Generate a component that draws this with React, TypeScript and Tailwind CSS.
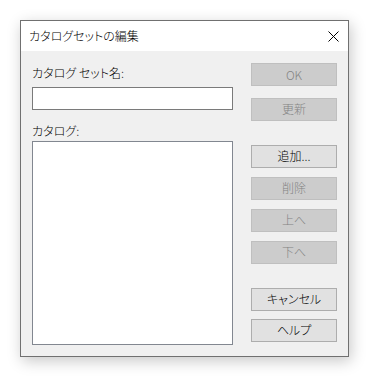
import React from 'react';

const font = '"Noto Sans CJK JP", "Noto Sans", sans-serif';

function DialogButton({ label, disabled = false }: { label: string; disabled?: boolean }) {
  return (
    <button
      type="button"
      disabled={disabled}
      className={
        disabled
          ? 'h-[23px] w-[86px] border border-[#bfbfbf] bg-[#cccccc] text-[12px] font-light leading-none text-[#838383]'
          : 'h-[23px] w-[86px] border border-[#adadad] bg-[#e1e1e1] text-[12px] font-light leading-none text-black'
      }
    >
      {label}
    </button>
  );
}

function CloseIcon() {
  return (
    <svg width="11" height="11" viewBox="0 0 11 11" className="block">
      <path d="M0.5 0.5 L10.5 10.5 M10.5 0.5 L0.5 10.5" stroke="#000" strokeWidth="1" fill="none" />
    </svg>
  );
}

export default function App() {
  return (
    <div
      className="h-[378px] w-[369px] bg-white pl-[20px] pt-[20px] font-light [font-feature-settings:'palt']"
      style={{ fontFamily: font }}
    >
      <div className="flex h-[337px] w-[329px] flex-col border border-[#707070] bg-[#f0f0f0] shadow-[2px_4px_14px_rgba(0,0,0,0.22)]">
        {/* title bar */}
        <div className="flex h-[30px] items-center justify-between bg-white pl-[8px] pr-[9px]">
          <span className="text-[12px] leading-[16px] text-black">カタログセットの編集</span>
          <CloseIcon />
        </div>

        {/* body */}
        <div className="flex gap-[18px] px-[11px] pt-[12px]">
          <div className="flex w-[201px] flex-col">
            <label className="mt-[2px] h-[16px] text-[12px] leading-[16px] text-black">カタログ セット名:</label>
            <input className="mt-[6px] h-[23px] w-[201px] border border-[#7a7a7a] bg-white outline-none" />
            <label className="mt-[13px] h-[16px] text-[12px] leading-[16px] text-black">カタログ:</label>
            <div className="mt-[2px] h-[204px] w-[201px] border border-[#828790] bg-white" />
          </div>

          <div className="flex w-[86px] flex-col">
            <DialogButton label="OK" disabled />
            <div className="mt-[9px]">
              <DialogButton label="更新" disabled />
            </div>
            <div className="mt-[24px] flex flex-col gap-[9px]">
              <DialogButton label="追加..." />
              <DialogButton label="削除" disabled />
              <DialogButton label="上へ" disabled />
              <DialogButton label="下へ" disabled />
            </div>
            <div className="mt-[24px] flex flex-col gap-[8px]">
              <DialogButton label="キャンセル" />
              <DialogButton label="ヘルプ" />
            </div>
          </div>
        </div>
      </div>
    </div>
  );
}
